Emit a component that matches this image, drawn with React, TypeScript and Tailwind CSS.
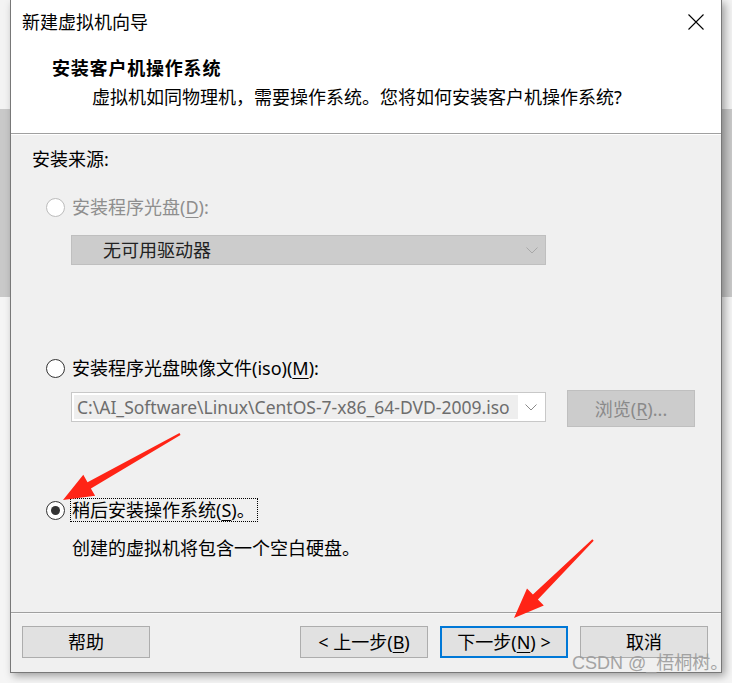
import React from "react";

interface IRadioProps {
  checked?: boolean;
  disabled?: boolean;
}

const Radio: React.FC<IRadioProps> = ({ checked, disabled }) => {
  return (
    <span
      className={
        disabled
          ? "flex h-[19px] w-[19px] shrink-0 items-center justify-center rounded-full border border-[#bcbcbc] bg-white"
          : "flex h-[19px] w-[19px] shrink-0 items-center justify-center rounded-full border border-[#333333] bg-white"
      }
    >
      {checked && <span className="h-[9px] w-[9px] rounded-full bg-[#333333]" />}
    </span>
  );
};

const Chevron = ({ color }: { color: string }) => (
  <svg width="12" height="7" viewBox="0 0 12 7" fill="none">
    <path d="M0.5 0.5 L6 6 L11.5 0.5" stroke={color} strokeWidth="1" />
  </svg>
);

const Mn = ({ c }: { c: string }) => <span className="underline underline-offset-[3px]">{c}</span>;

const Button = ({ children, primary }: { children: React.ReactNode; primary?: boolean }) => (
  <div
    className={
      primary
        ? "flex h-[32px] w-[128px] items-center justify-center border-2 border-[#0078d7] bg-[#e1e1e1] text-[18px] leading-[24px] text-black"
        : "flex h-[32px] w-[128px] items-center justify-center border border-[#adadad] bg-[#e1e1e1] text-[18px] leading-[24px] text-black"
    }
  >
    {children}
  </div>
);

export default function App() {
  return (
    <div className="relative h-[683px] w-[732px] overflow-hidden bg-[linear-gradient(to_bottom,#f3f3f3_109px,#c9c9c9_109px,#c9c9c9_297px,#f5f5f5_297px)] font-['Noto_Sans','Noto_Sans_CJK_SC',sans-serif] text-black">
      <div className="ml-[10px] flex h-[673px] w-[712px] flex-col border-x border-b border-[#787878] bg-[#f0f0f0] shadow-[3px_3px_8px_rgba(0,0,0,0.35)]">
        {/* header */}
        <div className="flex h-[134px] flex-col border-b border-[#a0a0a0] bg-white">
          <div className="flex h-[24px] items-center justify-between pl-[11px] pr-[17px] mt-[10px] text-[18px] leading-[24px]">
            <span>新建虚拟机向导</span>
            <svg width="16" height="16" viewBox="0 0 16 16" fill="none">
              <path d="M0.5 0.5 L15.5 15.5 M15.5 0.5 L0.5 15.5" stroke="#000" strokeWidth="1.1" />
            </svg>
          </div>
          <div className="mt-[22px] pl-[41px] text-[18px] font-bold leading-[24px] tracking-[0.8px]">
            安装客户机操作系统
          </div>
          <div className="mt-[5px] pl-[81px] text-[18px] leading-[24px]">
            虚拟机如同物理机，需要操作系统。您将如何安装客户机操作系统?
          </div>
        </div>

        {/* body */}
        <div className="flex flex-1 flex-col border-t border-white text-[18px] leading-[24px]">
          <div className="mt-[12px] pl-[21px]">安装来源:</div>

          <div className="mt-[24px] flex h-[24px] items-center gap-[7px] pl-[35px] text-[#8e8e8e]">
            <Radio disabled />
            <span>
              安装程序光盘(<Mn c="D" />):
            </span>
          </div>

          <div className="ml-[60px] mt-[16px] flex h-[30px] w-[475px] items-center justify-between border border-[#bfbfbf] bg-[#cccccc] pl-[31px] pr-[7px] text-[#222]">
            <span>无可用驱动器</span>
            <Chevron color="#a8a8a8" />
          </div>

          <div className="mt-[91px] flex h-[24px] items-center gap-[7px] pl-[35px]">
            <Radio />
            <span>
              安装程序光盘映像文件(iso)(<Mn c="M" />):
            </span>
          </div>

          <div className="ml-[60px] mt-[10px] flex items-start gap-[21px]">
            <div className="mt-[2px] flex h-[30px] w-[475px] items-center border border-[#c8c8c8] bg-white p-[2px]">
              <div className="flex h-full w-[444px] items-center overflow-hidden whitespace-nowrap bg-[#eeeeee] pl-[3px] text-[17.5px] text-[#6d6d6d]">
                C:\AI_Software\Linux\CentOS-7-x86_64-DVD-2009.iso
              </div>
              <div className="flex flex-1 justify-center pt-[1px]">
                <Chevron color="#8a8a8a" />
              </div>
            </div>
            <div className="flex h-[37px] w-[128px] items-center justify-center border border-[#bfbfbf] bg-[#cccccc] text-[#8a8a8a]">
              浏览(<Mn c="R" />)...
            </div>
          </div>

          <div className="mt-[71px] flex h-[24px] items-center gap-[5px] pl-[35px]">
            <Radio checked />
            <span className="border border-dotted border-black pl-[1px] pr-[2px] leading-[22px]">
              稍后安装操作系统(<Mn c="S" />)。
            </span>
          </div>

          <div className="mt-[14px] pl-[61px]">创建的虚拟机将包含一个空白硬盘。</div>
        </div>

        {/* footer */}
        <div className="flex h-[60px] flex-col border-t border-[#a0a0a0]">
          <div className="flex flex-1 items-start justify-between border-t border-[#f8f8f8] pl-[11px] pr-[13px] pt-[12px]">
            <Button>帮助</Button>
            <div className="flex gap-[12px]">
              <Button>
                &lt; 上一步(<Mn c="B" />)
              </Button>
              <Button primary>
                下一步(<Mn c="N" />) &gt;
              </Button>
              <Button>取消</Button>
            </div>
          </div>
        </div>
      </div>

      {/* annotation arrows */}
      <svg className="pointer-events-none absolute left-0 top-0" width="732" height="683">
        <polygon
          fill="#ff2416"
          points="63,500 95.1,495.8 90.9,488.4 180.5,434.9 179.5,433.1 87.5,482.2 83.3,474.8"
        />
        <polygon
          fill="#ff2416"
          points="514,618 543.8,605.4 537.9,599.4 593.7,540.7 592.3,539.3 532.9,594.4 527,588.4"
        />
      </svg>

      <div className="pointer-events-none absolute left-[572px] top-[652px] font-['Liberation_Sans','Noto_Sans_CJK_SC',sans-serif] text-[18px] leading-[22px] text-[#9c9c9c] opacity-90">
        CSDN @_梧桐树。
      </div>
    </div>
  );
}
